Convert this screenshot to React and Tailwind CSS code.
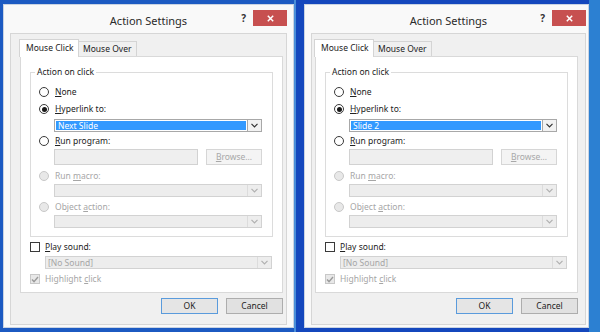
import React from 'react'

const font = "font-['Noto_Sans',sans-serif]"

function Radio({ checked, disabled }) {
  return (
    <span
      className={`w-[10px] h-[10px] rounded-full border flex items-center justify-center shrink-0 ${
        disabled ? 'border-[#c8c8c8] bg-[#e8e8e8]' : 'border-[#3a3a3a] bg-white'
      }`}
    >
      {checked && <span className="w-[5px] h-[5px] rounded-full bg-[#1a1a1a]" />}
    </span>
  )
}

function Chevron({ disabled }) {
  return (
    <svg width="7" height="5" viewBox="0 0 7 5">
      <path d="M0.5 0.8 L3.5 3.8 L6.5 0.8" fill="none" stroke={disabled ? '#b0b0b0' : '#333'} strokeWidth="1.2" />
    </svg>
  )
}

function Combo({ value, disabled, className = '' }) {
  return (
    <div
      className={`h-[13px] flex border ${
        disabled ? 'border-[#d2d2d2] bg-[#ededed]' : 'border-[#a8a8a8] bg-white'
      } ${className}`}
    >
      <div className="flex-1 flex">
        {value && (
          <div className="flex-1 m-[1px] bg-[#3399ff] text-white text-[8.5px] leading-[9px] pl-[2px] flex items-center">
            {value}
          </div>
        )}
      </div>
      <div
        className={`w-[14px] flex items-center justify-center border-l ${
          disabled ? 'border-[#dcdcdc]' : 'border-[#a8a8a8] bg-[#f2f2f2]'
        }`}
      >
        <Chevron disabled={disabled} />
      </div>
    </div>
  )
}

function Checkbox({ checked, disabled }) {
  return (
    <span
      className={`w-[10px] h-[10px] border flex items-center justify-center shrink-0 ${
        disabled ? 'border-[#c8c8c8] bg-[#e8e8e8]' : 'border-[#3a3a3a] bg-white'
      }`}
    >
      {checked && (
        <svg width="8" height="7" viewBox="0 0 8 7">
          <path d="M1 3.6 L3 5.6 L7 1" fill="none" stroke={disabled ? '#9a9a9a' : '#222'} strokeWidth="1.4" />
        </svg>
      )}
    </span>
  )
}

function Dialog({ value, winCls, clientCls }) {
  return (
    <div className={`mt-[4px] h-[324px] bg-[#f9f9f9] border border-[#c9d3e2] flex flex-col pb-[2px] ${winCls}`}>
      <div className="h-[28px] grid grid-cols-[1fr_auto_1fr] items-start">
        <div />
        <div className="pt-[9px] text-[11px] leading-[14px] text-[#2a2a2a]">Action Settings</div>
        <div className="flex justify-end items-start pt-[5px] gap-[7px]">
          <span className="text-[10px] font-bold leading-[14px] text-[#333] pt-[1px]">?</span>
          <div className="w-[34px] h-[16px] bg-[#c75050] flex items-center justify-center">
            <svg width="7" height="7" viewBox="0 0 7 7">
              <path d="M0.8 0.8 L6.2 6.2 M6.2 0.8 L0.8 6.2" stroke="#fff" strokeWidth="1.5" />
            </svg>
          </div>
        </div>
      </div>

      <div className={`flex-1 bg-[#f0f0f0] border border-[#d6d6d6] pt-[5px] pb-[10px] flex flex-col ${clientCls}`}>
        <div className="h-[17px] flex items-end text-[8.5px] text-[#222]">
          <div className="relative z-10 -mb-[1px] -ml-[1px] h-[18px] w-[60px] bg-white border border-b-0 border-[#d4d4d4] pl-[6px] pt-[2px] leading-[12px]">
            Mouse Click
          </div>
          <div className="h-[15px] w-[58px] bg-[#f0f0f0] border border-b-0 border-l-0 border-[#d4d4d4] pl-[4px] pt-[1px] leading-[12px]">
            Mouse Over
          </div>
        </div>

        <div className="h-[237px] bg-white border border-[#d9d9d9] pt-[9px] px-[9px] flex flex-col text-[8.5px] leading-[12px] text-[#222]">
          <fieldset className="border border-[#dcdcdc]">
            <legend className="ml-[4px] px-[2px] leading-[12px]">Action on click</legend>
            <div className="pl-[8px] pr-[10px] pb-[8px] flex flex-col">
              <div className="mt-[8px] h-[12px] flex items-center gap-[6px]">
                <Radio />
                <span><span className="underline">N</span>one</span>
              </div>
              <div className="mt-[5px] h-[12px] flex items-center gap-[6px]">
                <Radio checked />
                <span><span className="underline">H</span>yperlink to:</span>
              </div>
              <Combo value={value} className="mt-[4px] ml-[15px]" />
              <div className="mt-[3px] h-[12px] flex items-center gap-[6px]">
                <Radio />
                <span><span className="underline">R</span>un program:</span>
              </div>
              <div className="mt-[2px] ml-[15px] h-[16px] flex gap-[8px]">
                <div className="flex-1 bg-[#efefef] border border-[#d2d2d2]" />
                <div className="w-[56px] bg-[#f4f4f4] border border-[#d6d6d6] text-[#a8a8a8] flex items-center justify-center">
                  <span><span className="underline">B</span>rowse...</span>
                </div>
              </div>
              <div className="mt-[5px] h-[12px] flex items-center gap-[6px] text-[#a6a6a6]">
                <Radio disabled />
                <span>Run <span className="underline">m</span>acro:</span>
              </div>
              <Combo disabled className="mt-[2px] ml-[15px]" />
              <div className="mt-[4px] h-[12px] flex items-center gap-[6px] text-[#a6a6a6]">
                <Radio disabled />
                <span>Object <span className="underline">a</span>ction:</span>
              </div>
              <Combo disabled className="mt-[2px] ml-[15px]" />
            </div>
          </fieldset>

          <div className="mt-[4px] h-[12px] flex items-center gap-[5px]">
            <Checkbox />
            <span><span className="underline">P</span>lay sound:</span>
          </div>
          <div className="mt-[3px] ml-[15px] mr-[1px] h-[13px] flex border border-[#d2d2d2] bg-[#ededed]">
            <div className="flex-1 pl-[2px] text-[#a6a6a6] leading-[11px]">[No Sound]</div>
            <div className="w-[14px] flex items-center justify-center border-l border-[#dcdcdc]">
              <Chevron disabled />
            </div>
          </div>
          <div className="mt-[4px] h-[12px] flex items-center gap-[5px] text-[#a6a6a6]">
            <Checkbox checked disabled />
            <span>Highlight <span className="underline">c</span>lick</span>
          </div>
        </div>

        <div className="mt-[5px] flex justify-end gap-[8px] text-[8.5px] text-[#222]">
          <div className="w-[57px] h-[16px] bg-[#e5e5e5] border border-[#5a9bdc] flex items-center justify-center">OK</div>
          <div className="w-[57px] h-[16px] bg-[#e1e1e1] border border-[#adadad] flex items-center justify-center">Cancel</div>
        </div>
      </div>
    </div>
  )
}

export default function App() {
  return (
    <div
      className={`w-[600px] h-[332px] overflow-hidden flex items-start bg-[linear-gradient(90deg,#1c5ac2_0px,#1c5ac2_294px,#4a8ed8_294px,#4a8ed8_296px,#1447bd_296px,#1447bd_589px,#2c80d2_589px)] ${font}`}
    >
      <Dialog
        value="Next Slide"
        winCls="ml-[3px] w-[291px] px-[6px]"
        clientCls="pl-[9px] pr-[3px]"
      />
      <Dialog
        value="Slide 2"
        winCls="ml-[10px] w-[285px] pl-[6px] pr-[2px]"
        clientCls="pl-[3px] pr-[7px]"
      />
    </div>
  )
}
